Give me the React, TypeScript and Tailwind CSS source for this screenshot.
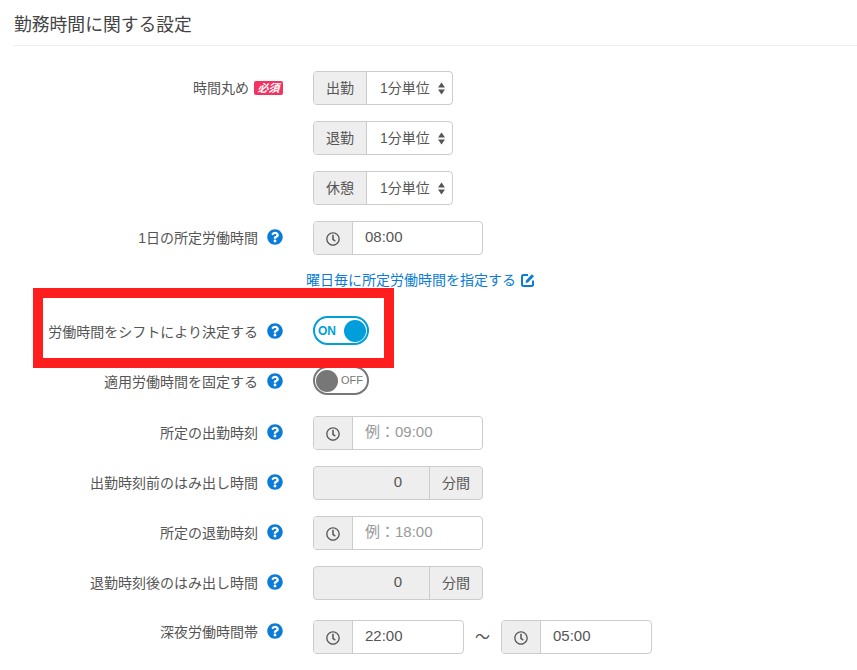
import { ReactNode } from 'react';
import { FaQuestionCircle, FaRegClock } from 'react-icons/fa';

const addon = 'flex items-center justify-center bg-[#eeeeee] text-[#555555]';

function Help() {
  return <FaQuestionCircle className="ml-[9px] mt-[-2px] w-4 h-4 text-[#0a7cd8] shrink-0" />;
}

function Row({ label, badge, help, className = 'mt-4', labelClass = 'h-[34px]', children }: {
  label?: string; badge?: boolean; help?: boolean; className?: string; labelClass?: string; children: ReactNode;
}) {
  return (
    <div className={`flex items-start ${className}`}>
      <div className={`w-[270px] shrink-0 flex items-center justify-end text-sm text-[#555555] ${labelClass}`}>
        {label && <span>{label}</span>}
        {badge && <span className="ml-[5px] w-[29px] h-[14px] rounded-[2px] bg-[#f5325f] text-white text-[11px] leading-[14px] font-bold italic text-center">必須</span>}
        {help && <Help />}
      </div>
      <div className="ml-[30px]">{children}</div>
    </div>
  );
}

function SelectGroup({ name }: { name: string }) {
  return (
    <div className="flex w-[140px] h-[34px] border border-[#cccccc] rounded text-sm text-[#555555]">
      <div className={`${addon} w-[53px] border-r border-[#cccccc] rounded-l-[3px]`}>{name}</div>
      <div className="flex-1 flex items-center pl-[13px]">
        <span>1分単位</span>
        <svg className="ml-[8px]" width="7" height="13" viewBox="0 0 7 13" fill="#555555">
          <path d="M3.5 0.5L7 5.5H0Z" />
          <path d="M3.5 12.5L0 7.5H7Z" />
        </svg>
      </div>
    </div>
  );
}

function TimeInput({ value, placeholder, wide = true }: { value?: string; placeholder?: string; wide?: boolean }) {
  return (
    <div className={`flex h-[34px] border border-[#cccccc] rounded text-[15px] ${wide ? 'w-[170px]' : 'w-[151px]'}`}>
      <div className={`${addon} w-[39px] border-r border-[#cccccc] rounded-l-[3px]`}>
        <FaRegClock className="w-[14px] h-[14px] mt-[1px]" />
      </div>
      <div className={`flex-1 pl-3 leading-[30px] ${value ? 'text-[#555555]' : 'text-[#999999]'}`}>
        {value ?? placeholder}
      </div>
    </div>
  );
}

function MinuteInput() {
  return (
    <div className="flex w-[170px] h-[34px] border border-[#cccccc] rounded text-[#555555] bg-[#eeeeee]">
      <div className="flex-1 text-right pr-[27px] text-[15px] leading-[30px]">0</div>
      <div className="w-[53px] border-l border-[#cccccc] flex items-center justify-center text-sm">分間</div>
    </div>
  );
}

function Toggle({ on }: { on: boolean }) {
  if (on) {
    return (
      <div className="flex items-center justify-between w-14 h-[29px] rounded-full border-2 border-[#009fdb] pl-[3px] pr-px">
        <span className="text-xs font-bold text-[#009fdb]">ON</span>
        <span className="w-[22px] h-[22px] rounded-full bg-[#009fdb]" />
      </div>
    );
  }
  return (
    <div className="flex items-center justify-between w-14 h-[29px] rounded-full border-2 border-[#777777] pl-px pr-[4px]">
      <span className="w-[22px] h-[22px] rounded-full bg-[#777777]" />
      <span className="text-[11px] text-[#777777]">OFF</span>
    </div>
  );
}

function EditIcon() {
  return (
    <svg className="ml-[5px]" width="14" height="14" viewBox="0 0 14 14" fill="none">
      <path d="M7 2H2.5A1.5 1.5 0 0 0 1 3.5v8A1.5 1.5 0 0 0 2.5 13h8a1.5 1.5 0 0 0 1.5-1.5V7.5" stroke="#0a7cd8" strokeWidth="2" />
      <path d="M5 7.5L10.8 1.2L13 3.3L7 9.5L4.6 10Z" fill="#0a7cd8" />
    </svg>
  );
}

export default function App() {
  return (
    <div className="relative w-[857px] h-[670px] overflow-hidden bg-white pl-[13px] font-['Liberation_Sans','Noto_Sans_CJK_JP',sans-serif]">
      <h2 className="h-[46px] pt-[12px] border-b border-[#eeeeee] text-[17.8px] leading-[26px] text-[#444444] pl-px">勤務時間に関する設定</h2>

      <Row label="時間丸め" badge className="mt-[25px]"><SelectGroup name="出勤" /></Row>
      <Row><SelectGroup name="退勤" /></Row>
      <Row><SelectGroup name="休憩" /></Row>
      <Row label="1日の所定労働時間" help><TimeInput value="08:00" /></Row>

      <div className="mt-[15px] ml-[293px] flex items-center h-5 text-sm text-[#0a7cd8]">
        <span>曜日毎に所定労働時間を指定する</span>
        <EditIcon />
      </div>

      <Row label="労働時間をシフトにより決定する" help className="mt-[26px]" labelClass="h-[31px]"><Toggle on /></Row>
      <Row label="適用労働時間を固定する" help className="mt-[19px]" labelClass="h-[31px]"><Toggle on={false} /></Row>
      <Row label="所定の出勤時刻" help className="mt-[19px]"><TimeInput placeholder="例：09:00" /></Row>
      <Row label="出勤時刻前のはみ出し時間" help><MinuteInput /></Row>
      <Row label="所定の退勤時刻" help><TimeInput placeholder="例：18:00" /></Row>
      <Row label="退勤時刻後のはみ出し時間" help><MinuteInput /></Row>
      <Row label="深夜労働時間帯" help className="mt-5" labelClass="h-6">
        <div className="flex items-center">
          <TimeInput value="22:00" wide={false} />
          <span className="w-[37px] text-center text-[15px] text-[#555555]">〜</span>
          <TimeInput value="05:00" wide={false} />
        </div>
      </Row>

      <div className="absolute left-[33px] top-[288px] w-[361px] h-[80px] border-[10px] border-[#ff1d1d]" />
    </div>
  );
}
